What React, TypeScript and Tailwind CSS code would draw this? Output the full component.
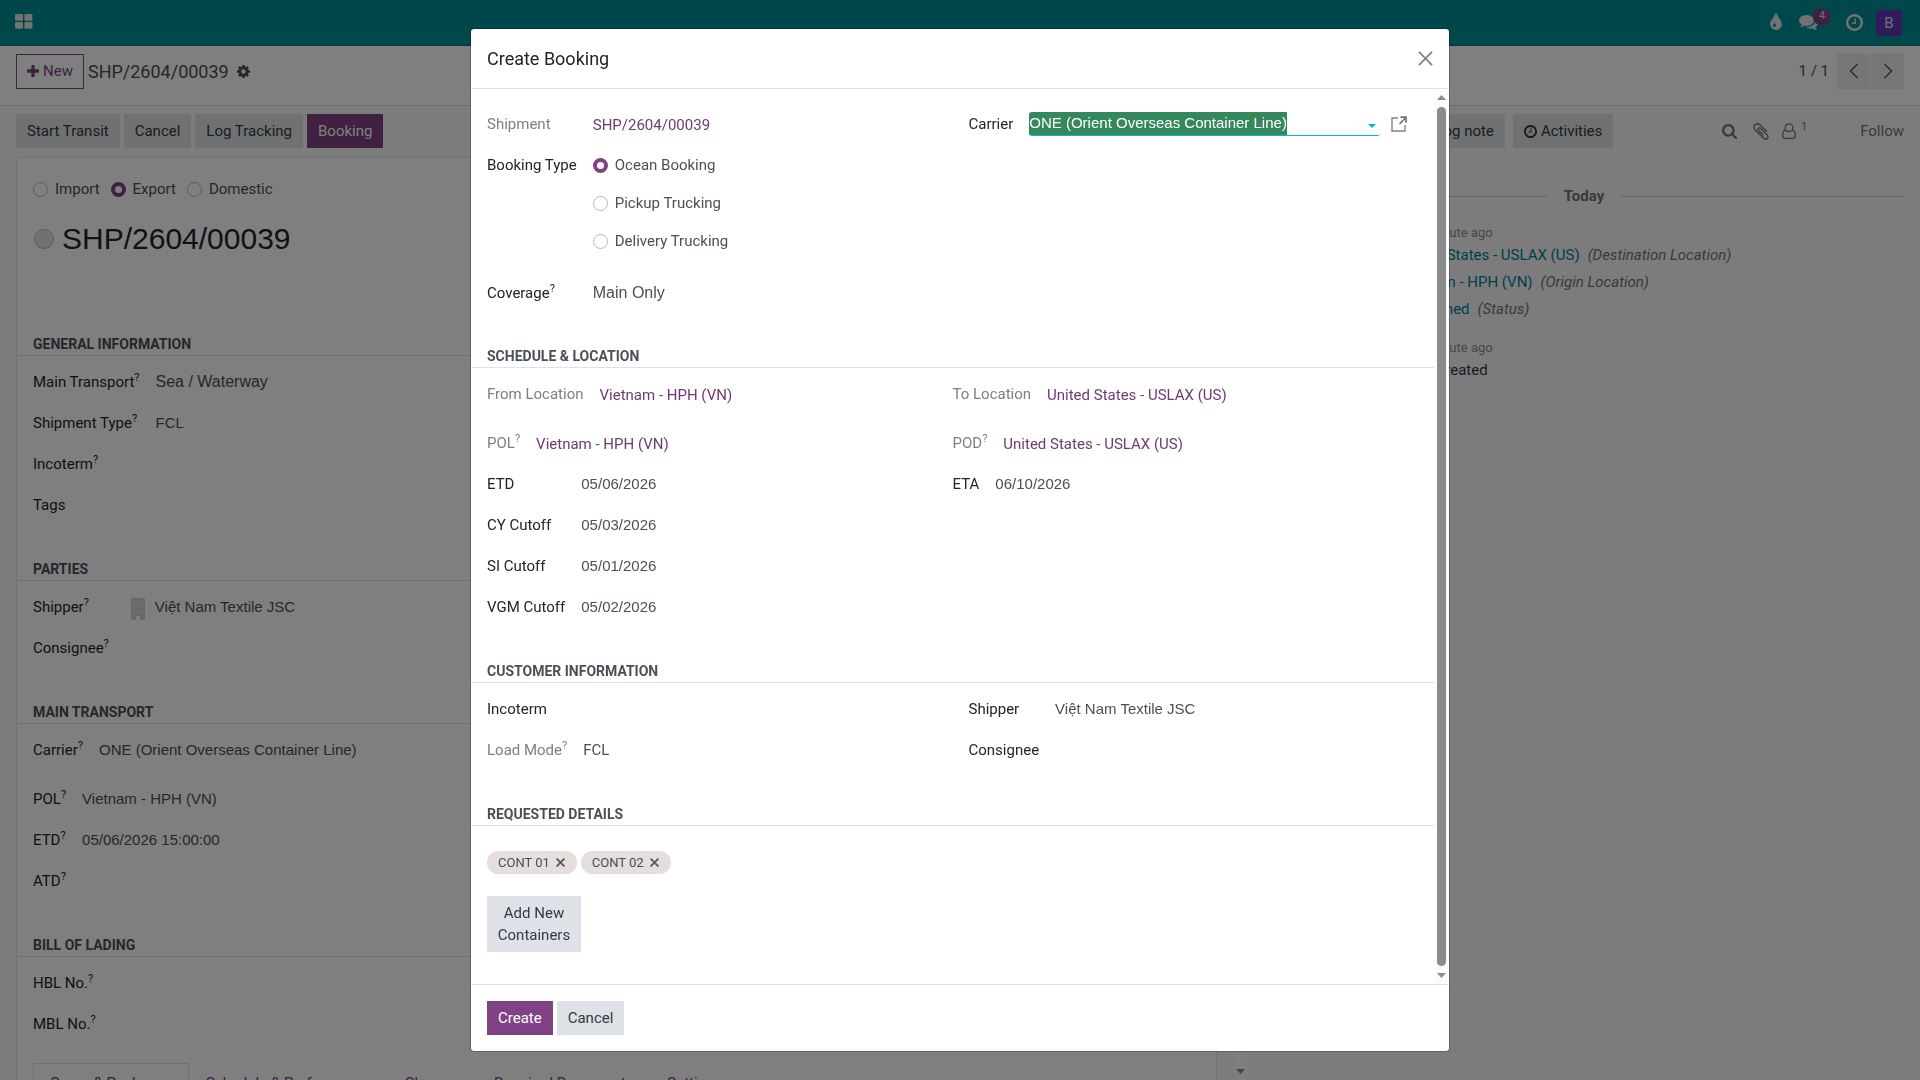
import { useEffect, useRef, useState } from 'react';
import type { ReactNode } from 'react';
import clsx from 'clsx';

/* ---------- icons ---------- */

const paths = {
  plus: {
    box: '0 192 1408 1408',
    d: 'M1408 800v192q0 40-28 68t-68 28h-416v416q0 40-28 68t-68 28h-192q-40 0-68-28t-28-68v-416h-416q-40 0-68-28t-28-68v-192q0-40 28-68t68-28h416v-416q0-40 28-68t68-28h192q40 0 68 28t28 68v416h416q40 0 68 28t28 68z',
  },
  cog: {
    box: '0 128 1536 1536',
    d: 'M1024 896q0-106-75-181t-181-75-181 75-75 181 75 181 181 75 181-75 75-181zm512-109v222q0 12-8 23t-20 13l-185 28q-19 54-39 91 35 50 107 138 10 12 10 25t-9 23q-27 37-99 108t-94 71q-12 0-26-9l-138-108q-44 23-91 38-16 136-29 186-7 28-36 28h-222q-14 0-24.5-8.5t-11.5-21.5l-28-184q-49-16-90-37l-141 107q-10 9-25 9-14 0-25-11-126-114-165-168-7-10-7-23 0-12 8-23 15-21 51-66.5t54-70.5q-27-50-41-99l-183-27q-13-2-21-12.5t-8-23.5v-222q0-12 8-23t19-13l186-28q14-46 39-92-40-57-107-138-10-12-10-24 0-10 9-23 26-36 98.5-107.5t94.5-71.5q13 0 26 10l138 107q44-23 91-38 16-136 29-186 7-28 36-28h222q14 0 24.5 8.5t11.5 21.5l28 184q49 16 90 37l142-107q9-9 24-9 13 0 25 10 129 119 165 170 7 8 7 22 0 12-8 23-15 21-51 66.5t-54 70.5q26 50 41 98l183 28q13 2 21 12.5t8 23.5z',
  },
  tint: {
    box: '0 64 1024 1472',
    d: 'M512 1152q0-36-20-69-1-1-15.5-22.5t-25.5-38-25-44-21-50.5q-4-16-21-16t-21 16q-7 23-21 50.5t-25 44-25.5 38-15.5 22.5q-20 33-20 69 0 53 37.5 90.5t90.5 37.5 90.5-37.5 37.5-90.5zm512-128q0 212-150 362t-362 150-362-150-150-362q0-145 81-275 6-9 62.5-90.5t101-151 99.5-178 83-201.5q9-30 34-47t51-17 51.5 17 33.5 47q28 93 83 201.5t99.5 178 101 151 62.5 90.5q81 127 81 275z',
  },
  comments: {
    box: '0 256 1792 1408',
    d: 'M1408 768q0 139-94 257t-256.5 186.5-353.5 68.5q-86 0-176-16-124 88-278 128-36 9-86 16h-3q-11 0-20.5-8t-11.5-21q-1-3-1-6.5t.5-6.5 2-6l2.5-5t3.5-5.5 4-5 4.5-5 4-4.5q5-6 23-25t26-29.5 22.5-29 25-38.5 20.5-44q-124-72-195-177t-71-224q0-139 94-257t256.5-186.5 353.5-68.5 353.5 68.5 256.5 186.5 94 257zm384 256q0 120-71 224.5t-195 176.5q10 24 20.5 44t25 38.5 22.5 29 26 29.5 23 25q1 1 4 4.5t4.5 5 4 5 3.5 5.5l2.5 5t2 6 .5 6.5-1 6.5q-3 14-13 22t-22 7q-50-7-86-16-154-40-278-128-90 16-176 16-271 0-472-132 58 4 88 4 161 0 309-45t264-129q125-92 192-212t67-254q0-77-23-152 129 71 204 178t75 230z',
  },
  clock: {
    box: '0 128 1536 1536',
    d: 'M896 544v448q0 14-9 23t-23 9h-320q-14 0-23-9t-9-23v-64q0-14 9-23t23-9h224v-352q0-14 9-23t23-9h64q14 0 23 9t9 23zm416 352q0-148-73-273t-198-198-273-73-273 73-198 198-73 273 73 273 198 198 273 73 273-73 198-198 73-273zm224 0q0 209-103 385.5t-279.5 279.5-385.5 103-385.5-103-279.5-279.5-103-385.5 103-385.5 279.5-279.5 385.5-103 385.5 103 279.5 279.5 103 385.5z',
  },
  search: {
    box: '0 128 1664 1664',
    d: 'M1152 832q0-185-131.5-316.5t-316.5-131.5-316.5 131.5-131.5 316.5 131.5 316.5 316.5 131.5 316.5-131.5 131.5-316.5zm512 832q0 52-38 90t-90 38q-54 0-90-38l-343-342q-179 124-399 124-143 0-273.5-55.5t-225-150-150-225-55.5-273.5 55.5-273.5 150-225 225-150 273.5-55.5 273.5 55.5 225 150 150 225 55.5 273.5q0 220-124 399l343 343q37 37 37 90z',
  },
  clip: {
    box: '0 128 1408 1536',
    d: 'M1404 1385q0 117-79 196t-196 79q-135 0-235-100l-777-776q-113-115-113-271 0-159 110-270t269-111q158 0 273 113l605 606q10 10 10 22 0 16-30.5 46.5t-46.5 30.5q-13 0-23-10l-606-607q-79-77-181-77-106 0-179 75t-73 181q0 105 76 181l776 777q63 63 145 63 64 0 106-42t42-106q0-82-63-145l-581-581q-26-24-60-24-29 0-48 19t-19 48q0 32 25 59l410 410q10 10 10 22 0 16-31 47t-47 31q-12 0-22-10l-410-410q-63-61-63-149 0-82 57-139t139-57q88 0 149 63l581 581q100 98 100 235z',
  },
};

const Icon = ({ name, className }: { name: keyof typeof paths; className?: string }) => (
  <svg viewBox={paths[name].box} fill="currentColor" className={clsx('shrink-0', className)} aria-hidden="true">
    <path d={paths[name].d} />
  </svg>
);

const AppsIcon = () => (
  <svg viewBox="0 0 18 15" className="h-[15px] w-[18px]" fill="currentColor" aria-hidden="true">
    <rect x="0" y="0" width="8" height="6.8" rx="1.3" />
    <rect x="9.4" y="0" width="8" height="6.8" rx="1.3" />
    <rect x="0" y="8" width="8" height="6.8" rx="1.3" />
    <rect x="9.4" y="8" width="8" height="6.8" rx="1.3" />
  </svg>
);

const UserIcon = () => (
  <svg viewBox="0 0 14 16" className="h-4 w-[14px]" fill="none" stroke="currentColor" strokeWidth="1.2" aria-hidden="true">
    <circle cx="7" cy="4.8" r="3.9" />
    <path d="M3.6 7.2C1.5 7.6.7 9.8.7 12.4c0 1.8 1 2.9 2.5 2.9h7.6c1.5 0 2.5-1.1 2.5-2.9 0-2.6-.8-4.8-2.9-5.2" />
  </svg>
);

const BuildingIcon = () => (
  <svg viewBox="0 0 14 22" className="h-[22px] w-[14px]" aria-hidden="true">
    <path d="M0 1a1 1 0 0 1 1-1h12a1 1 0 0 1 1 1v21H9v-4H5v4H0z" fill="#cfd1d3" />
    <path d="M2 3h10M2 6h10M2 9h10M2 12h10M2 15h10" stroke="#e6e7e8" strokeWidth="1.4" strokeDasharray="1.6 1.2" />
  </svg>
);

const Chevron = ({ right }: { right?: boolean }) => (
  <svg viewBox="0 0 10 16" className="h-4 w-[10px]" fill="none" stroke="currentColor" strokeWidth="1.3" aria-hidden="true">
    <path d={right ? 'M1.5 1l7 7-7 7' : 'M8.5 1l-7 7 7 7'} />
  </svg>
);

const LaunchIcon = () => (
  <svg viewBox="0 0 16 16" className="size-4" fill="none" aria-hidden="true">
    <path d="M7 2H1v13h13V9" stroke="#7d838a" strokeWidth="1.4" />
    <path d="M8.5 8l6-6" stroke="#6c757d" strokeWidth="1.7" />
    <path d="M9.5 1.2H15v5.5" stroke="#6c757d" strokeWidth="1.7" />
  </svg>
);

const Cross = ({ className, width }: { className: string; width: number }) => (
  <svg viewBox="0 0 16 16" className={className} fill="none" stroke="currentColor" strokeWidth={width} aria-hidden="true">
    <path d="M1 1l14 14M15 1L1 15" />
  </svg>
);

const Arrow = ({ up }: { up?: boolean }) => (
  <svg viewBox="0 0 9 5" className="h-[5px] w-[9px]" fill="currentColor" aria-hidden="true">
    <path d={up ? 'M0 5L4.5 0 9 5z' : 'M0 0h9L4.5 5z'} />
  </svg>
);

/* ---------- shared pieces ---------- */

const Scrollbar = ({ thumb = 'flex-1' }: { thumb?: string }) => (
  <div className="flex w-[15px] shrink-0 flex-col items-center gap-[7px] bg-[#fcfcfc] py-[6px] text-[#8b8b8b]">
    <Arrow up />
    <div className={clsx('w-[9px] rounded-full bg-[#8b8b8b]', thumb)} />
    <Arrow />
  </div>
);

const Button = ({ primary, className, children, onClick }: { primary?: boolean; className?: string; children: ReactNode; onClick?: () => void }) => (
  <button
    type="button"
    onClick={onClick}
    className={clsx(
      'flex items-center gap-1 py-[6px] leading-[22px]',
      primary ? 'bg-[#804284] text-white' : 'bg-[#dee2e6] text-[#343a40]',
      className ?? 'px-[11px]',
    )}
  >
    {children}
  </button>
);

const Radio = ({ name, label, checked }: { name: string; label: string; checked?: boolean }) => (
  <label className="flex items-center gap-[7px] text-[#495057]">
    <input
      type="radio"
      name={name}
      defaultChecked={checked}
      className="size-[15px] appearance-none rounded-full border border-[#b5b8bb] bg-white checked:border-4 checked:border-[#804284]"
    />
    {label}
  </label>
);

const Section = ({ title, children }: { title: string; children: ReactNode }) => (
  <section className="mt-8 pb-px">
    <h3 className="h-[23px] border-b border-[#dee2e6] px-4 text-sm leading-[22px] font-bold text-[#495057] uppercase">{title}</h3>
    <div className="mt-[5px] px-4">{children}</div>
  </section>
);

// Label column is as wide as its longest label
const Group = ({ children }: { children: ReactNode }) => (
  <div className="grid auto-rows-[minmax(41px,auto)] grid-cols-[auto_1fr] content-start items-center gap-x-4">{children}</div>
);

type FieldProps = {
  id: string;
  label: string;
  help?: boolean;
  readOnly?: boolean;
  value?: string;
  kind?: 'input' | 'select' | 'link' | 'text';
  icon?: ReactNode;
};

const Field = ({ id, label, help, readOnly, value = '', kind = 'input', icon }: FieldProps) => (
  <>
    <label htmlFor={id} className={clsx('whitespace-nowrap', readOnly ? 'text-[#7c8084]' : 'text-[#212529]')}>
      {label}
      {help && <sup className="top-[-6px] text-[11px] leading-none">?</sup>}
    </label>
    <div className="flex min-w-0 items-center text-[#495057]">
      {icon}
      {kind === 'input' && (
        <input id={id} defaultValue={value} className="w-full min-w-0 bg-transparent font-['Liberation_Sans',sans-serif] outline-none" />
      )}
      {kind === 'select' && (
        <select id={id} className="appearance-none bg-transparent font-['Liberation_Sans',sans-serif] text-base outline-none">
          <option>{value}</option>
        </select>
      )}
      {kind === 'link' && (
        <a id={id} href="#" className="pt-[2px] text-[#6f3a74]">
          {value}
        </a>
      )}
      {kind === 'text' && <span id={id}>{value}</span>}
    </div>
  </>
);

/* ---------- page behind the dialog ---------- */

const Navbar = () => (
  <header className="flex h-[46px] shrink-0 items-center justify-between border-b border-[#00747c] bg-[#008f98] pr-[18px] pl-[15px] text-[#dfe3e6]">
    <button type="button" aria-label="Apps" className="pb-[3px]">
      <AppsIcon />
    </button>
    <div className="flex items-center">
      <button type="button" aria-label="Theme" className="pb-[2px]">
        <Icon name="tint" className="h-[17px] w-3" />
      </button>
      <button type="button" aria-label="Messages" className="relative ml-[17px]">
        <Icon name="comments" className="h-[15px] w-[19px]" />
        <span className="absolute -top-[7px] left-[14px] flex size-[18px] items-center justify-center rounded-full bg-[#804284] pb-[3px] text-[11px] leading-none">
          4
        </span>
      </button>
      <button type="button" aria-label="Activities" className="ml-7 pb-px">
        <Icon name="clock" className="size-[17px]" />
      </button>
      <button type="button" className="ml-[13px] size-[26px] rounded bg-[#6236b8] leading-[26px]">
        B
      </button>
    </div>
  </header>
);

const ControlPanel = () => (
  <div className="flex h-[60px] shrink-0 items-start justify-between border-b border-[#dee2e6] bg-white px-4 pt-2">
    <div className="flex items-center">
      <button type="button" className="flex h-[35px] items-center gap-1 border border-[#804284] px-[10px] pb-px text-[#804284]">
        <Icon name="plus" className="size-3" />
        New
      </button>
      <span className="ml-1 text-lg text-[#495057]">SHP/2604/00039</span>
      <button type="button" aria-label="Actions" className="ml-2 pb-px text-[#495057]">
        <Icon name="cog" className="size-[13px]" />
      </button>
    </div>
    <div className="flex items-center text-[#495057]">
      <span className="mr-2 pb-px">1 / 1</span>
      <button type="button" aria-label="Previous" className="mr-px flex h-[35px] w-[33px] items-center justify-center bg-[#e9ecef] pb-px">
        <Chevron />
      </button>
      <button type="button" aria-label="Next" className="flex h-[35px] w-[33px] items-center justify-center bg-[#e9ecef] pb-px">
        <Chevron right />
      </button>
    </div>
  </div>
);

const tabs = ['Cargo & Packages', 'Schedule & Performance', 'Charges', 'Required Documents', 'Settings'];

const ShipmentForm = () => (
  <div className="flex min-w-0 flex-1">
    <div className="flex min-w-0 flex-1 flex-col overflow-hidden px-4 pt-2">
      <div className="flex shrink-0 gap-1">
        <Button>Start Transit</Button>
        <Button>Cancel</Button>
        <Button>Log Tracking</Button>
        <Button primary>Booking</Button>
      </div>
      <div className="mt-[9px] flex-1 border border-b-0 border-[#dee2e6] bg-white">
        <div className="flex gap-[11px] px-4 pt-5">
          <Radio name="direction" label="Import" />
          <Radio name="direction" label="Export" checked />
          <Radio name="direction" label="Domestic" />
        </div>
        <div className="mt-[15px] mb-[70px] flex h-12 items-center gap-2 px-[17px]">
          <span className="size-5 rounded-full border border-[#b5b8bb] bg-[#dee2e6]" />
          <h1 className="font-['Liberation_Sans',sans-serif] text-3xl text-[#212529]">SHP/2604/00039</h1>
        </div>

        <Section title="General Information">
          <Group>
            <Field id="main-transport" label="Main Transport" help kind="select" value="Sea / Waterway" />
            <Field id="shipment-type" label="Shipment Type" help value="FCL" />
            <Field id="incoterm" label="Incoterm" help />
            <Field id="tags" label="Tags" />
          </Group>
        </Section>
        <Section title="Parties">
          <Group>
            <Field
              id="shipper"
              label="Shipper"
              help
              value="Việt Nam Textile JSC"
              icon={
                <span className="mr-[10px] ml-[6px] pt-1">
                  <BuildingIcon />
                </span>
              }
            />
            <Field id="consignee" label="Consignee" help />
          </Group>
        </Section>
        <Section title="Main Transport">
          <div className="flex flex-col gap-2">
            <Group>
              <Field id="carrier" label="Carrier" help value="ONE (Orient Overseas Container Line)" />
            </Group>
            <Group>
              <Field id="pol" label="POL" help value="Vietnam - HPH (VN)" />
              <Field id="etd" label="ETD" help value="05/06/2026 15:00:00" />
              <Field id="atd" label="ATD" help />
            </Group>
          </div>
        </Section>
        <Section title="Bill of Lading">
          <Group>
            <Field id="hbl" label="HBL No." help />
            <Field id="mbl" label="MBL No." help />
          </Group>
        </Section>

        <div className="mt-[18px] flex px-4">
          {tabs.map((tab, i) => (
            <button
              key={tab}
              type="button"
              className={clsx(
                'border border-b-0 px-4 py-2 leading-[22px]',
                i === 0 ? 'border-[#dee2e6] text-[#495057]' : 'border-transparent text-[#804284]',
              )}
            >
              {tab}
            </button>
          ))}
        </div>
      </div>
    </div>
    <Scrollbar thumb="mb-auto h-3/5" />
  </div>
);

const changes = [
  { from: 'None', to: 'United States - USLAX (US)', field: 'Destination Location' },
  { from: 'None', to: 'Vietnam - HPH (VN)', field: 'Origin Location' },
  { from: 'Draft', to: 'Confirmed', field: 'Status' },
];

const Message = ({ children }: { children: ReactNode }) => (
  <li className="flex gap-3">
    <span className="mt-1 size-9 rounded bg-[#6236b8] text-center leading-9 text-white">B</span>
    <div>
      <p className="flex items-center gap-[2px] leading-5">
        <b>Booking Admin</b>
        <span className="text-[13px] text-[#8a8f94]">1 minute ago</span>
      </p>
      {children}
    </div>
  </li>
);

const Chatter = () => (
  <aside className="w-[35%] shrink-0 px-4 pt-2">
    <div className="flex items-center justify-between">
      <div className="flex gap-2">
        <Button primary className="px-[27px]">
          Send message
        </Button>
        <Button>Log note</Button>
        <Button>
          <Icon name="clock" className="size-[13px]" />
          Activities
        </Button>
      </div>
      <div className="flex items-center text-[#6c757d]">
        <button type="button" aria-label="Search messages">
          <Icon name="search" className="size-[15px]" />
        </button>
        <button type="button" aria-label="Attach files" className="ml-4">
          <Icon name="clip" className="h-[17px] w-4" />
        </button>
        <button type="button" aria-label="Followers" className="ml-[13px] flex">
          <UserIcon />
          <sup className="top-[-2px] ml-[5px] text-[11px] leading-none">1</sup>
        </button>
        <button type="button" className="ml-[53px]">
          Follow
        </button>
      </div>
    </div>

    <div className="mt-[37px] flex items-center gap-4">
      <hr className="flex-1 border-[#ced4da]" />
      <span className="font-bold text-[#6c757d]">Today</span>
      <hr className="flex-1 border-[#ced4da]" />
    </div>

    <ul className="mt-4 flex flex-col gap-4">
      <Message>
        <ul className="-mt-[2px] text-[#495057]">
          {changes.map(({ from, to, field }) => (
            <li key={field} className="flex h-[27px] items-center">
              <span className="w-[52px]">{from}</span>
              <span className="w-9 text-center">→</span>
              <span className="text-[#017e9a]">{to}</span>
              <i className="ml-2 text-[#6c757d]">({field})</i>
            </li>
          ))}
        </ul>
      </Message>
      <Message>
        <p className="leading-6 text-[#343a40]">Booking Shipment created</p>
      </Message>
    </ul>
  </aside>
);

/* ---------- dialog ---------- */

const CarrierField = () => {
  const ref = useRef<HTMLInputElement>(null);

  useEffect(() => {
    ref.current?.focus();
    ref.current?.select();
  }, []);

  return (
    <>
      <label htmlFor="bk-carrier" className="text-[#212529]">
        Carrier
      </label>
      <div className="flex items-center gap-[11px] pt-px">
        <div className="relative flex-1">
          {/* full-height highlight behind the selected value */}
          <input
            id="bk-carrier"
            ref={ref}
            defaultValue="ONE (Orient Overseas Container Line)"
            className="block h-6 w-full rounded-[3px] border-b border-[#00b8cf] bg-[linear-gradient(#34885c,#34885c)] bg-[length:258px_100%] bg-no-repeat pb-[2px] font-['Liberation_Sans',sans-serif] text-white outline-none selection:bg-transparent selection:text-white"
          />
          <svg viewBox="0 0 8 4" className="absolute top-3 right-1 h-1 w-2" fill="#00b8cf" aria-hidden="true">
            <path d="M0 0h8L4 4z" />
          </svg>
        </div>
        <button type="button" aria-label="Open carrier" className="mr-[11px]">
          <LaunchIcon />
        </button>
      </div>
    </>
  );
};

const BookingDialog = () => {
  const [containers, setContainers] = useState(['CONT 01', 'CONT 02']);

  return (
    <div className="fixed inset-0 z-10 flex justify-center bg-black/50 py-7">
      <div
        role="dialog"
        aria-labelledby="dialog-title"
        className="flex w-full max-w-[980px] flex-col overflow-hidden rounded border border-black/20 bg-white bg-clip-padding"
      >
        <header className="flex h-[60px] shrink-0 items-center justify-between border-b border-[#dee2e6] px-4">
          <h2 id="dialog-title" className="text-lg text-[#212529]">
            Create Booking
          </h2>
          <button type="button" aria-label="Close" className="text-[#7f7f7f]">
            <Cross className="size-[15px]" width={1.8} />
          </button>
        </header>

        <div className="flex min-h-0 flex-1">
          <div className="min-w-0 flex-1 overflow-hidden pt-[14px]">
            <div className="grid grid-cols-2 gap-x-8 px-4">
              <Group>
                <Field id="bk-shipment" label="Shipment" readOnly kind="link" value="SHP/2604/00039" />
                <span className="self-start leading-[43px] text-[#212529]">Booking Type</span>
                <div className="flex flex-col gap-4 pt-[10px] pb-5">
                  <Radio name="booking-type" label="Ocean Booking" checked />
                  <Radio name="booking-type" label="Pickup Trucking" />
                  <Radio name="booking-type" label="Delivery Trucking" />
                </div>
                <Field id="bk-coverage" label="Coverage" help kind="select" value="Main Only" />
              </Group>
              <Group>
                <CarrierField />
              </Group>
            </div>

            <Section title="Schedule & Location">
              <div className="grid grid-cols-2 gap-y-2">
                <Group>
                  <Field id="bk-from" label="From Location" readOnly kind="link" value="Vietnam - HPH (VN)" />
                </Group>
                <Group>
                  <Field id="bk-to" label="To Location" readOnly kind="link" value="United States - USLAX (US)" />
                </Group>
                <div>
                  <Group>
                    <Field id="bk-pol" label="POL" help readOnly kind="link" value="Vietnam - HPH (VN)" />
                  </Group>
                  <Group>
                    <Field id="bk-etd" label="ETD" value="05/06/2026" />
                    <Field id="bk-cy" label="CY Cutoff" value="05/03/2026" />
                    <Field id="bk-si" label="SI Cutoff" value="05/01/2026" />
                    <Field id="bk-vgm" label="VGM Cutoff" value="05/02/2026" />
                  </Group>
                </div>
                <div>
                  <Group>
                    <Field id="bk-pod" label="POD" help readOnly kind="link" value="United States - USLAX (US)" />
                  </Group>
                  <Group>
                    <Field id="bk-eta" label="ETA" value="06/10/2026" />
                  </Group>
                </div>
              </div>
            </Section>

            <Section title="Customer Information">
              <div className="grid grid-cols-2 gap-x-8">
                <Group>
                  <Field id="bk-incoterm" label="Incoterm" />
                  <Field id="bk-load" label="Load Mode" help readOnly kind="text" value="FCL" />
                </Group>
                <Group>
                  <Field id="bk-shipper" label="Shipper" value="Việt Nam Textile JSC" />
                  <Field id="bk-consignee" label="Consignee" />
                </Group>
              </div>
            </Section>

            <Section title="Requested Details">
              <ul className="flex gap-1 pt-5">
                {containers.map((name) => (
                  <li key={name} className="flex h-[23px] items-center rounded-full bg-[#e6dedd] px-[11px] text-[13px] text-[#495057]">
                    {name}
                    <button
                      type="button"
                      aria-label={`Remove ${name}`}
                      className="mr-px ml-[6px] text-[#5b5b5b]"
                      onClick={() => setContainers(containers.filter((c) => c !== name))}
                    >
                      <Cross className="size-[9px]" width={3.4} />
                    </button>
                  </li>
                ))}
              </ul>
              <Button className="mt-[22px] w-[94px] justify-center text-center">Add New Containers</Button>
            </Section>
          </div>
          <Scrollbar />
        </div>

        <footer className="flex shrink-0 gap-1 border-t border-[#dee2e6] px-4 py-4">
          <Button primary>Create</Button>
          <Button>Cancel</Button>
        </footer>
      </div>
    </div>
  );
};

export default function App() {
  return (
    <div className="flex h-screen flex-col overflow-hidden bg-[#f8f9fa] font-[Roboto,sans-serif] text-[15px] leading-[22px] text-[#212529]">
      <Navbar />
      <ControlPanel />
      <div className="flex min-h-0 flex-1">
        <ShipmentForm />
        <Chatter />
      </div>
      <BookingDialog />
    </div>
  );
}
